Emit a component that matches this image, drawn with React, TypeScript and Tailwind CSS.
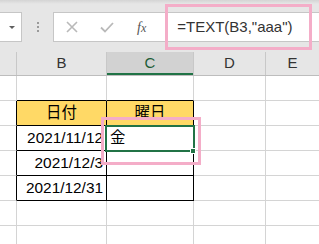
import React from "react";

const font = { fontFamily: '"Liberation Sans", "Noto Sans CJK JP", sans-serif' };

function Toolbar() {
  return (
    <div className="relative h-[52px] bg-[#e6e6e6] pt-[12px]">
      <div className="absolute left-0 right-0 top-0 h-[4px] bg-gradient-to-b from-[#d4d4d4] to-[#e6e6e6]" />
      <div className="flex h-[30px] items-stretch">
        {/* name box */}
        <div className="flex w-[22px] items-center justify-end border border-l-0 border-[#c6c6c6] bg-white pr-[6px]">
          <div className="h-0 w-0 border-x-[3px] border-t-[3px] border-x-transparent border-t-[#5f5f5f]" />
        </div>
        <div className="flex w-[31px] flex-col items-center justify-center gap-[2px]">
          <div className="h-[2px] w-[2px] bg-[#9a9a9a]" />
          <div className="h-[2px] w-[2px] bg-[#9a9a9a]" />
          <div className="h-[2px] w-[2px] bg-[#9a9a9a]" />
        </div>
        {/* formula box */}
        <div className="flex flex-1 items-center border border-r-0 border-[#c6c6c6] bg-white">
          <svg width="12" height="12" viewBox="0 0 12 12" className="ml-[12px]">
            <path d="M1 1 L11 11 M11 1 L1 11" stroke="#b9b9b9" strokeWidth="1.6" fill="none" />
          </svg>
          <svg width="14" height="11" viewBox="0 0 14 11" className="ml-[22px]">
            <path d="M1 5.5 L5 9.5 L13 1" stroke="#b9b9b9" strokeWidth="1.8" fill="none" />
          </svg>
          <span
            className="ml-[23px] text-[14px] italic text-[#555]"
            style={{ fontFamily: '"Liberation Serif", serif' }}
          >
            f<span className="text-[12px]">x</span>
          </span>
          <span className="ml-[31px] text-[15px] text-[#333]" style={font}>
            =TEXT(B3,"aaa")
          </span>
        </div>
      </div>
    </div>
  );
}

function ColHeader() {
  return (
    <div className="flex h-[24px] border-b border-[#bdbdbd] bg-[#e6e6e6] text-[15px] text-[#333]" style={font}>
      <div className="w-[17px] border-r border-[#c8c8c8]" />
      <div className="flex w-[90px] items-center justify-center border-r border-[#c8c8c8]">B</div>
      <div className="flex w-[87px] items-center justify-center border-r border-[#c8c8c8] bg-[#d2d2d2] text-[#1d5c37] shadow-[inset_0_-2px_0_#217346]">
        C
      </div>
      <div className="flex w-[72px] items-center justify-center border-r border-[#c8c8c8]">D</div>
      <div className="flex flex-1 items-center justify-center">E</div>
    </div>
  );
}

type Row = {
  b?: string;
  c?: string;
  head?: boolean;
  table?: boolean;
  top?: boolean;
};

const rows: Row[] = [
  { top: true },
  { b: "日付", c: "曜日", head: true, table: true },
  { b: "2021/11/12", c: "金", table: true },
  { b: "2021/12/3", table: true },
  { b: "2021/12/31", table: true },
  {},
  {},
];

function Body() {
  return (
    <div className="relative bg-white text-[15.4px] text-black" style={font}>
      {rows.map((r, i) => (
        <div key={i} className="flex h-[25px]">
          <div className={`w-[17px] border-b border-r border-b-[#d4d4d4] ${r.table ? "border-r-black" : "border-r-[#d4d4d4]"}`} />
          <div
            className={`flex w-[90px] items-center border-b border-r ${
              r.table ? "border-black" : r.top ? "border-r-[#d4d4d4] border-b-black" : "border-[#d4d4d4]"
            } ${r.head ? "justify-center bg-[#ffd966]" : "justify-end pr-[3px]"}`}
          >
            {r.b}
          </div>
          <div
            className={`flex w-[87px] items-center border-b border-r ${
              r.table ? "border-black" : r.top ? "border-r-[#d4d4d4] border-b-black" : "border-[#d4d4d4]"
            } ${r.head ? "justify-center bg-[#ffd966]" : "pl-[3px]"}`}
          >
            {r.c}
          </div>
          <div className={`w-[72px] border-b border-r border-[#d4d4d4] ${i === 0 ? "" : ""}`} />
          <div className="flex-1 border-b border-[#d4d4d4]" />
        </div>
      ))}
      {/* selected cell C3 */}
      <div className="absolute left-[105px] top-[49px] h-[27px] w-[90px] border-2 border-[#217346]" />
      <div className="absolute left-[190px] top-[72px] h-[6px] w-[6px] border border-white bg-[#217346]" />
    </div>
  );
}

export default function App() {
  return (
    <div className="relative h-[244px] w-[319px] overflow-hidden bg-white">
      <Toolbar />
      <ColHeader />
      <Body />
      {/* annotation boxes */}
      <div className="absolute left-[165px] top-[4px] h-[46px] w-[147px] border-[3px] border-[#f4adc8]" />
      <div className="absolute left-[101px] top-[117px] h-[48px] w-[100px] border-[3px] border-[#f4adc8]" />
    </div>
  );
}
